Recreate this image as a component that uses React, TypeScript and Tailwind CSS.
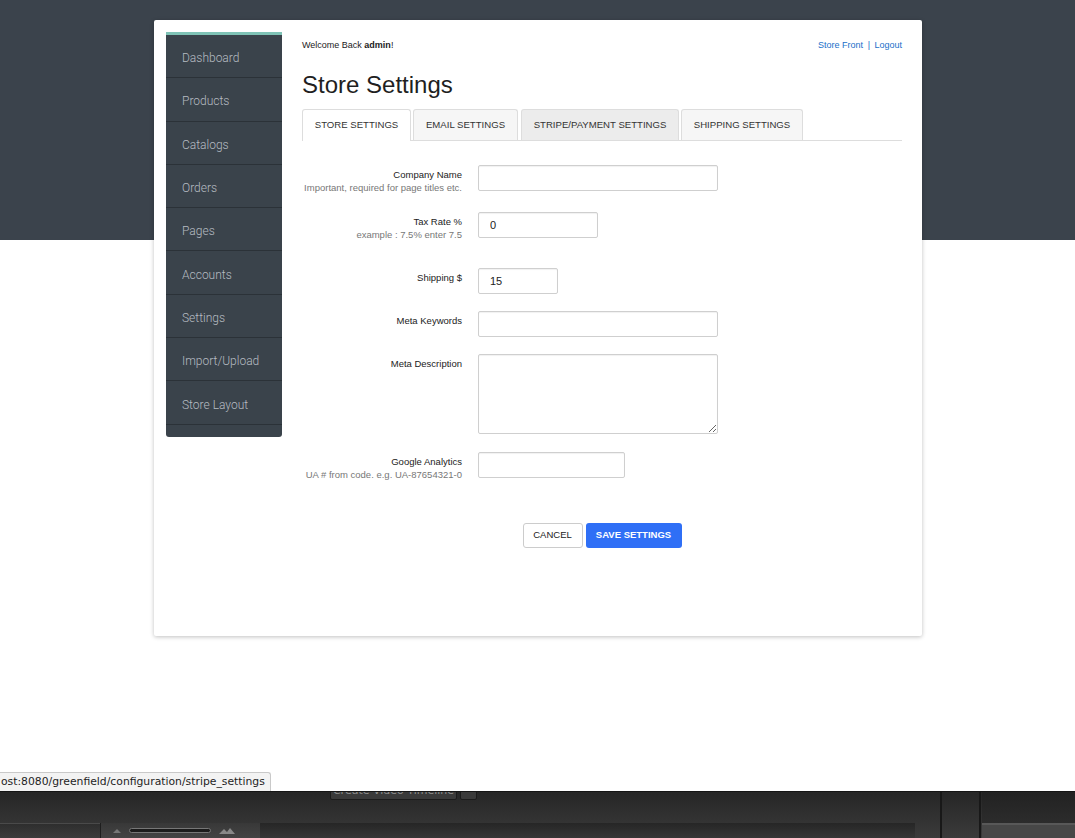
import React from "react";

const navItems = [
  "Dashboard",
  "Products",
  "Catalogs",
  "Orders",
  "Pages",
  "Accounts",
  "Settings",
  "Import/Upload",
  "Store Layout",
];

function Label({ title, help }: { title: string; help?: string }) {
  return (
    <div className="w-[160px] shrink-0 text-right pt-[3px] leading-[13px]">
      <div className="text-[9.5px] text-[#222]">{title}</div>
      {help && <div className="text-[9.5px] text-[#777]">{help}</div>}
    </div>
  );
}

const inputCls =
  "h-[26px] border border-[#cfcfcf] rounded-[2px] shadow-[inset_0_1px_1px_rgba(0,0,0,0.06)] px-[11px] text-[11px] text-[#222] outline-none bg-white font-['Liberation_Sans',sans-serif]";

export default function App() {
  return (
    <div className="relative w-[1075px] h-[838px] overflow-hidden bg-white font-['Liberation_Sans',Arial,sans-serif]">
      {/* header band behind card */}
      <div className="absolute top-0 left-0 right-0 h-[240px] bg-[#3b434c]" />

      <div className="relative pt-[20px] pl-[154px]">
        <div className="w-[768px] h-[616px] bg-white rounded-[2px] shadow-[0_1px_4px_rgba(0,0,0,0.25)] flex pt-[12px] pl-[12px]">
          {/* Sidebar */}
          <div className="w-[116px] h-[405px] bg-[#3a434b] border-t-[3px] border-[#7fc3b6] rounded-b-[3px] flex flex-col pb-[12px]">
            {navItems.map((n) => (
              <div
                key={n}
                className="h-[43.3px] shrink-0 border-b border-[#2b3238] flex items-center pl-[16px] pt-[4px] text-[12px] text-[#b6bcc2] font-['Roboto',sans-serif] font-light"
              >
                {n}
              </div>
            ))}
          </div>

          {/* Main */}
          <div className="ml-[20px] w-[600px] flex flex-col">
            <div className="mt-[8px] h-[11px] flex justify-between items-center text-[9px] leading-[11px]">
              <div className="text-[#222]">
                Welcome Back <span className="font-bold">admin</span>!
              </div>
              <div className="text-[#1a6fc9]">
                Store Front <span className="mx-[2px]">|</span> Logout
              </div>
            </div>

            <h1 className="mt-[20px] text-[24px] leading-[28px] text-[#1f1f1f]">
              Store Settings
            </h1>

            {/* Tabs */}
            <div className="mt-[10px] h-[32px] flex items-end gap-[2px] border-b border-[#dddddd]">
              <div className="w-[109px] h-[32px] -mb-[1px] bg-white border border-b-0 border-[#dddddd] rounded-t-[3px] flex items-center justify-center text-[9.6px] text-[#333]">
                STORE SETTINGS
              </div>
              <div className="w-[105px] h-[31px] bg-[#f6f6f6] border border-b-0 border-[#dddddd] rounded-t-[3px] flex items-center justify-center text-[9.6px] text-[#333]">
                EMAIL SETTINGS
              </div>
              <div className="ml-[1px] w-[158px] h-[31px] bg-[#ececec] border border-b-0 border-[#dddddd] rounded-t-[3px] flex items-center justify-center text-[9.6px] text-[#333]">
                STRIPE/PAYMENT SETTINGS
              </div>
              <div className="w-[122px] h-[31px] bg-[#f6f6f6] border border-b-0 border-[#dddddd] rounded-t-[3px] flex items-center justify-center text-[9.6px] text-[#333]">
                SHIPPING SETTINGS
              </div>
            </div>

            {/* Form */}
            <div className="mt-[24px] flex gap-[16px]">
              <Label title="Company Name" help="Important, required for page titles etc." />
              <input className={`${inputCls} w-[240px]`} defaultValue="" />
            </div>
            <div className="mt-[18px] flex gap-[16px]">
              <Label title="Tax Rate %" help="example : 7.5% enter 7.5" />
              <input className={`${inputCls} w-[120px]`} defaultValue="0" />
            </div>
            <div className="mt-[27px] flex gap-[16px]">
              <Label title="Shipping $" />
              <input className={`${inputCls} w-[80px]`} defaultValue="15" />
            </div>
            <div className="mt-[17px] flex gap-[16px]">
              <Label title="Meta Keywords" />
              <input className={`${inputCls} w-[240px]`} defaultValue="" />
            </div>
            <div className="mt-[17px] flex gap-[16px]">
              <Label title="Meta Description" />
              <textarea
                className="w-[240px] h-[80px] border border-[#cfcfcf] rounded-[2px] shadow-[inset_0_1px_1px_rgba(0,0,0,0.06)] outline-none bg-white"
                defaultValue=""
              />
            </div>
            <div className="mt-[18px] flex gap-[16px]">
              <Label title="Google Analytics" help="UA # from code. e.g. UA-87654321-0" />
              <input className={`${inputCls} w-[147px]`} defaultValue="" />
            </div>

            <div className="mt-[42px] flex justify-center gap-[3px]">
              <button className="w-[60px] h-[25px] border border-[#cccccc] rounded-[3px] bg-white text-[9.5px] text-[#222] font-['Liberation_Sans',sans-serif]">
                CANCEL
              </button>
              <button className="w-[96px] h-[25px] rounded-[3px] bg-[#2f6ff6] text-[9.5px] font-bold text-white font-['Liberation_Sans',sans-serif]">
                SAVE SETTINGS
              </button>
            </div>
          </div>
        </div>
      </div>

      {/* status tooltip */}
      <div className="absolute left-0 top-[772px] h-[19px] pl-[1px] pr-[5px] bg-[#f3f3f3] border border-l-0 border-b-0 border-[#c9c9c9] rounded-tr-[3px] flex items-center text-[10.8px] text-[#1e1e1e] font-['DejaVu_Sans',sans-serif]">
        ost:8080/greenfield/configuration/stripe_settings
      </div>

      {/* bottom app chrome */}
      <div className="absolute left-0 right-0 top-[791px] h-[47px] overflow-hidden flex flex-col border-t border-[#151515] bg-gradient-to-b from-[#262626] to-[#3b3b3b]">
        <div className="h-[31px] flex relative">
          <div className="ml-[330px] -mt-[9px] h-[17px] w-[127px] border border-[#1b1b1b] rounded-[2px] bg-[#3a3a3a] overflow-hidden flex items-start justify-center">
            <span className="text-[11px] leading-[11px] text-[#8c8c8c] font-['DejaVu_Sans',sans-serif] mt-[1px]">
              Create Video Timeline
            </span>
          </div>
          <div className="ml-[3px] -mt-[9px] h-[17px] w-[17px] border border-[#1b1b1b] rounded-[2px] bg-[#3a3a3a]" />
          <div className="absolute left-[940px] top-0 w-[2px] h-[47px] bg-[#181818]" />
          <div className="absolute left-[979px] top-0 w-[2px] h-[47px] bg-[#181818]" />
          <div className="absolute left-[982px] right-0 top-0 h-[31px] bg-gradient-to-b from-[#222] to-[#2c2c2c]" />
        </div>
        <div className="h-[15px] flex">
          <div className="w-[100px] bg-gradient-to-b from-[#2e2e2e] to-[#3c3c3c] border-t border-[#4a4a4a]" />
          <div className="w-[1px] bg-[#1e1e1e]" />
          <div className="w-[159px] bg-gradient-to-b from-[#383838] to-[#444] flex items-center gap-[8px] pl-[12px]">
            <svg width="8" height="5" viewBox="0 0 8 5"><path d="M0 5 L4 1 L8 5 Z" fill="#777" /></svg>
            <div className="w-[82px] h-[5px] rounded-full border border-[#777] bg-[#1c1c1c]" />
            <svg width="16" height="6" viewBox="0 0 16 6"><path d="M0 6 L5 1 L8 4 L11 0 L16 6 Z" fill="#888" /></svg>
          </div>
          <div className="w-[655px] bg-gradient-to-b from-[#262626] to-[#363636]" />
          <div className="flex-1 flex">
            <div className="w-[26px]" />
            <div className="w-[41px]" />
            <div className="flex-1 bg-[#474747] border-t-[2px] border-[#585858]" />
          </div>
        </div>
      </div>
    </div>
  );
}
